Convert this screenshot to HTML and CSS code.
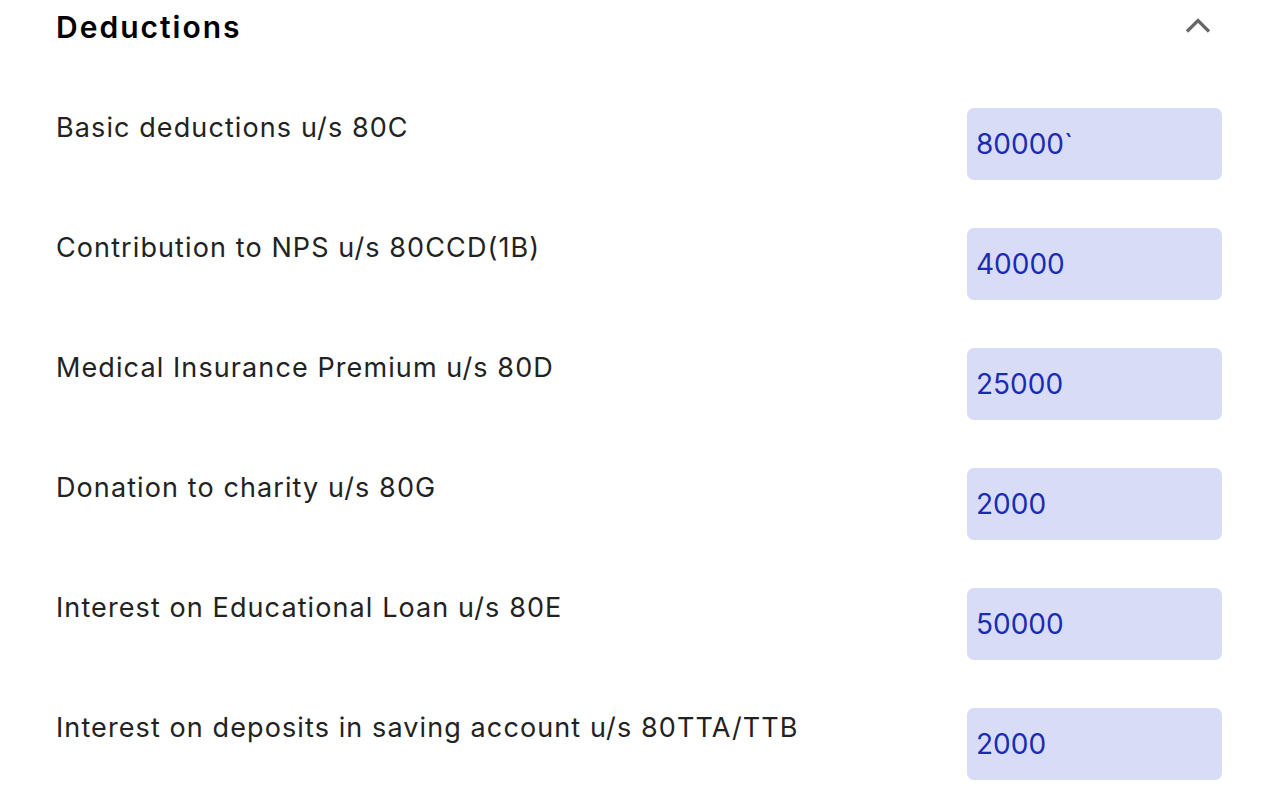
FILE: index.html
```html
<!DOCTYPE html>
<html lang="en">

<head>
  <meta charset="UTF-8">
  <title>Deductions</title>

  <link rel="stylesheet" href="styles.css">
</head>

<body>
  <section class="deductions">
    <div class="deductions-header">
      <h2>Deductions</h2>
      <button class="toggle" aria-label="Collapse">
        <svg width="26" height="16" viewBox="0 0 26 16">
          <polyline points="2,13.5 13,2.5 24,13.5" fill="none" stroke="#666" stroke-width="3.2" stroke-linejoin="miter" />
        </svg>
      </button>
    </div>

    <div class="fields">
      <div class="field">
        <label for="d80c">Basic deductions u/s 80C</label>
        <input id="d80c" type="text" value="80000`">
      </div>
      <div class="field">
        <label for="d80ccd">Contribution to NPS u/s 80CCD(1B)</label>
        <input id="d80ccd" type="text" value="40000">
      </div>
      <div class="field">
        <label for="d80d">Medical Insurance Premium u/s 80D</label>
        <input id="d80d" type="text" value="25000">
      </div>
      <div class="field">
        <label for="d80g">Donation to charity u/s 80G</label>
        <input id="d80g" type="text" value="2000">
      </div>
      <div class="field">
        <label for="d80e">Interest on Educational Loan u/s 80E</label>
        <input id="d80e" type="text" value="50000">
      </div>
      <div class="field">
        <label for="d80tta">Interest on deposits in saving account u/s 80TTA/TTB</label>
        <input id="d80tta" type="text" value="2000">
      </div>
    </div>
  </section>
</body>

</html>
```
FILE: styles.css
```css
html {
  background: white;
}

body {
  margin: 0;
  font-family: "Inter", "Open Sans", sans-serif;
  color: #222;
}

.deductions {
  padding: 0 62px 0 56px;
}

.deductions-header {
  display: flex;
  align-items: center;
  justify-content: space-between;
  height: 60px;
}

.deductions-header h2 {
  margin: 0;
  font-size: 30px;
  font-weight: 600;
  letter-spacing: 2px;
  line-height: 36px;
  color: #000;
  transform: translateY(-3px);
}

.toggle {
  border: 0;
  background: none;
  padding: 0;
  margin-right: 11px;
  display: flex;
  transform: translateY(-4px);
}

.fields {
  display: flex;
  flex-direction: column;
  gap: 48px;
  margin-top: 48px;
}

.field {
  display: flex;
  align-items: flex-start;
  justify-content: space-between;
}

.field label {
  font-size: 27px;
  line-height: 40px;
  letter-spacing: 1.1px;
  color: #222;
}

.field input {
  box-sizing: border-box;
  width: 255px;
  height: 72px;
  border: 0;
  border-radius: 7px;
  padding: 0 10px 0 9px;
  background: #d8dcf6;
  font-family: "Inter", sans-serif;
  font-size: 28px;
  color: #1a2cb4;
  outline: none;
}
```
